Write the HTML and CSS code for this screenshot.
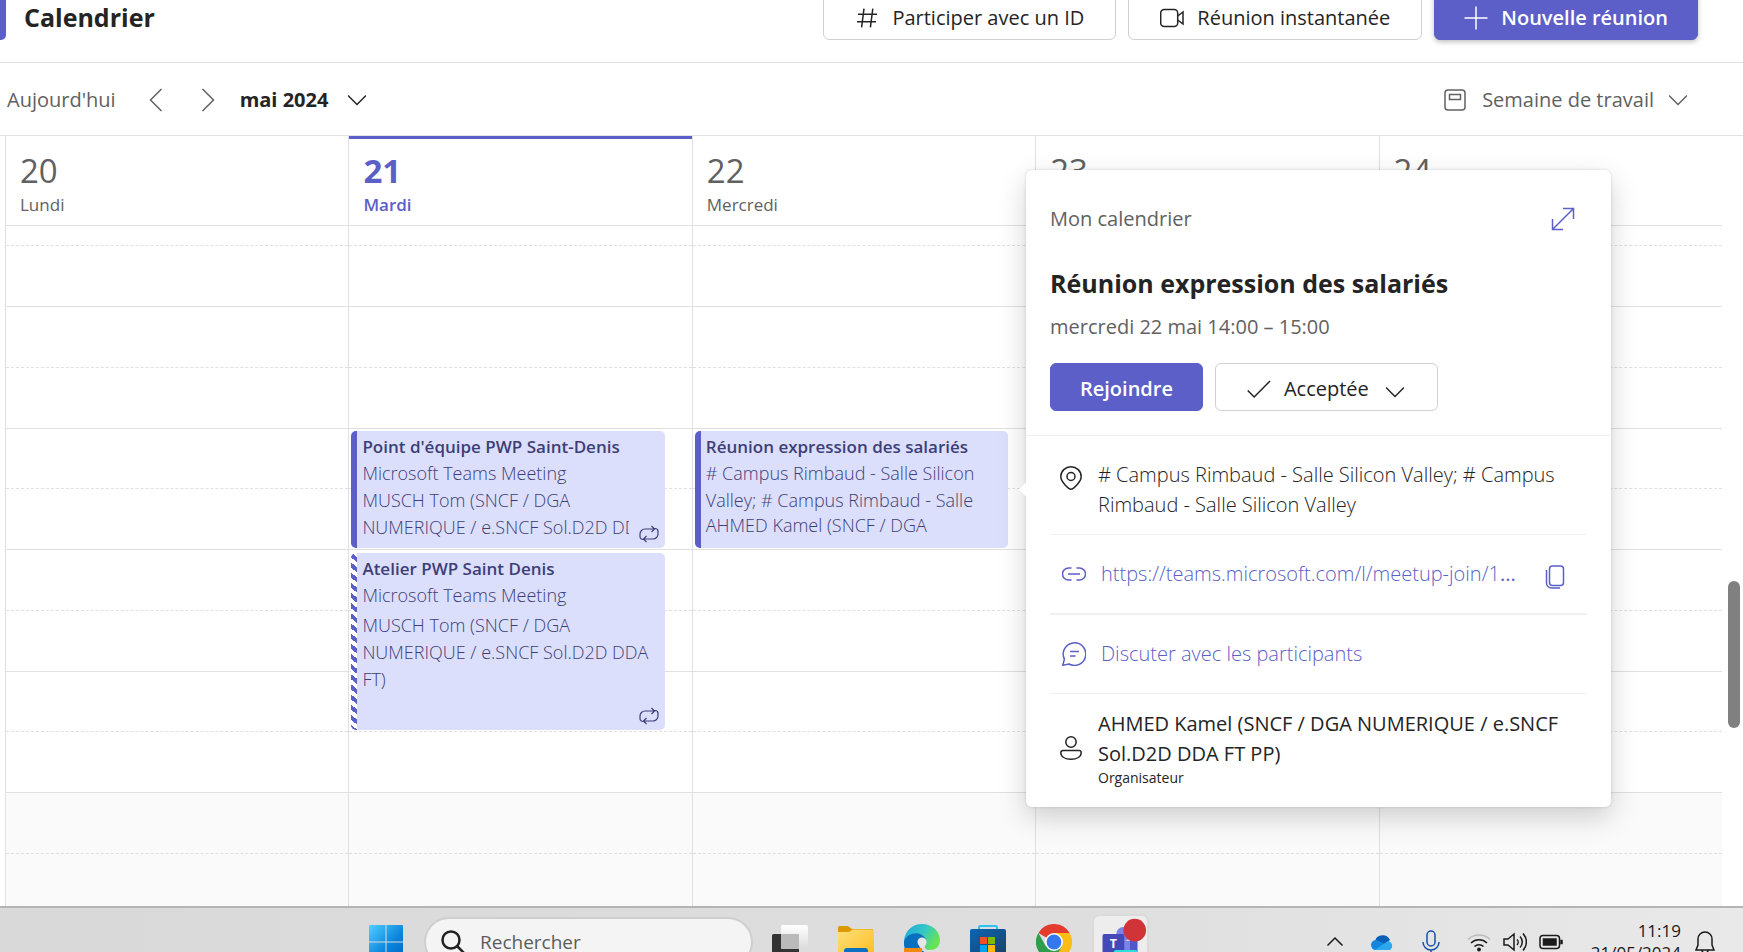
FILE: index.html
```html
<!DOCTYPE html>
<html lang="fr">
<head>
<meta charset="utf-8">
<title>Calendrier</title>
<link rel="stylesheet" href="styles.css">
</head>
<body>
<header class="header">
  <span class="header-accent"></span>
  <h1 class="header-title">Calendrier</h1>
  <div class="header-actions">
    <button class="btn btn-outline" type="button">
      <svg class="icon-24" viewBox="0 0 24 24"><path d="M9 2.600 6.600 21.400M17.800 2.600 15.400 21.400M3 8.300h19M2 15.700h19"/></svg>
      Participer avec un ID
    </button>
    <button class="btn btn-outline" type="button">
      <svg class="icon-24" viewBox="0 0 24 24"><rect x=".7" y="3.500" width="17" height="17" rx="3.500"/><path d="M17.700 10 23 6v12l-5.300-4"/></svg>
      Réunion instantanée
    </button>
    <button class="btn btn-primary btn-raised" type="button">
      <svg class="icon-24" viewBox="0 0 24 24"><path d="M12 .5v23M.5 12h23"/></svg>
      Nouvelle réunion
    </button>
  </div>
</header>

<nav class="toolbar">
  <button class="tool today" type="button">Aujourd'hui</button>
  <button class="tool" type="button" aria-label="Semaine précédente"><svg class="icon-24" viewBox="0 0 24 24"><path d="M17.500 1 6.500 12l11 11"/></svg></button>
  <button class="tool" type="button" aria-label="Semaine suivante"><svg class="icon-24" viewBox="0 0 24 24"><path d="m6.500 1 11 11-11 11"/></svg></button>
  <button class="tool month" type="button">mai 2024 <svg class="icon-18" viewBox="0 0 18 18"><path d="m0 4.500 9 9 9-9"/></svg></button>
  <button class="tool view" type="button">
    <svg class="icon-24" viewBox="0 0 24 24"><rect x="2" y="2" width="20" height="20" rx="3"/><path d="M6.500 6.500h11v5h-11z"/></svg>
    Semaine de travail
    <svg class="icon-18" viewBox="0 0 18 18"><path d="m0 4.500 9 9 9-9"/></svg>
  </button>
</nav>

<main class="calendar">
  <div class="days">
    <section class="day">
      <header class="day-head"><span class="day-num">20</span><span class="day-name">Lundi</span></header>
      <div class="slots"><i class="half"></i><i></i><i class="half"></i><i></i><i class="half"></i><i></i><i class="half"></i><i></i><i class="half"></i><i></i><i class="half off"></i><i class="off"></i></div>
    </section>
    <section class="day day-today">
      <header class="day-head"><span class="day-num">21</span><span class="day-name">Mardi</span></header>
      <div class="slots"><i class="half"></i><i></i><i class="half"></i><i></i><i class="half"></i><i></i><i class="half"></i><i></i><i class="half"></i><i></i><i class="half off"></i><i class="off"></i>
        <article class="event event-team">
          <h2>Point d'équipe PWP Saint-Denis</h2>
          <p>Microsoft Teams Meeting</p>
          <p class="clip">MUSCH Tom (SNCF / DGA<br>NUMERIQUE / e.SNCF Sol.D2D DDA</p>
          <svg class="repeat" viewBox="0 0 20 18"><path d="M4.500 14.500h-.5a3 3 0 0 1-3-3V9a5 5 0 0 1 5-5h9M15.500 3.500H16a3 3 0 0 1 3 3V9a5 5 0 0 1-5 5H5M12.500 1l3 3-3 3M7.500 11l-3 3 3 3"/></svg>
        </article>
        <article class="event event-workshop">
          <h2>Atelier PWP Saint Denis</h2>
          <p>Microsoft Teams Meeting</p>
          <p class="people">MUSCH Tom (SNCF / DGA<br>NUMERIQUE / e.SNCF Sol.D2D DDA<br>FT)</p>
          <svg class="repeat" viewBox="0 0 20 18"><path d="M4.500 14.500h-.5a3 3 0 0 1-3-3V9a5 5 0 0 1 5-5h9M15.500 3.500H16a3 3 0 0 1 3 3V9a5 5 0 0 1-5 5H5M12.500 1l3 3-3 3M7.500 11l-3 3 3 3"/></svg>
        </article>
      </div>
    </section>
    <section class="day">
      <header class="day-head"><span class="day-num">22</span><span class="day-name">Mercredi</span></header>
      <div class="slots"><i class="half"></i><i></i><i class="half"></i><i></i><i class="half"></i><i></i><i class="half"></i><i></i><i class="half"></i><i></i><i class="half off"></i><i class="off"></i>
        <article class="event event-salaries">
          <h2>Réunion expression des salariés</h2>
          <p># Campus Rimbaud - Salle Silicon<br>Valley; # Campus Rimbaud - Salle</p>
          <p class="organiser">AHMED Kamel (SNCF / DGA</p>
        </article>
      </div>
    </section>
    <section class="day">
      <header class="day-head"><span class="day-num">23</span></header>
      <div class="slots"><i class="half"></i><i></i><i class="half"></i><i></i><i class="half"></i><i></i><i class="half"></i><i></i><i class="half"></i><i></i><i class="half off"></i><i class="off"></i></div>
    </section>
    <section class="day">
      <header class="day-head"><span class="day-num">24</span></header>
      <div class="slots"><i class="half"></i><i></i><i class="half"></i><i></i><i class="half"></i><i></i><i class="half"></i><i></i><i class="half"></i><i></i><i class="half off"></i><i class="off"></i></div>
    </section>
  </div>
  <div class="scroll-track"><span class="scroll-thumb"></span></div>

  <aside class="popup">
    <div class="popup-top">
      <div class="popup-bar">
        <span>Mon calendrier</span>
        <button class="icon-btn" type="button" aria-label="Agrandir"><svg class="icon-24" viewBox="0 0 24 24"><path d="M1.500 22.500l21-21M12 1.500h10.500V12M1.500 12v10.500H12"/></svg></button>
      </div>
      <h2 class="popup-title">Réunion expression des salariés</h2>
      <p class="popup-date">mercredi 22 mai 14:00 – 15:00</p>
      <div class="popup-actions">
        <button class="btn btn-primary join" type="button">Rejoindre</button>
        <button class="btn btn-outline accept" type="button">
          <svg class="icon-24" viewBox="0 0 24 24"><path d="m.7 13.500 6.500 6.500L23 4"/></svg>
          Acceptée
          <svg class="icon-18 chevron" viewBox="0 0 18 18"><path d="m0 4.500 9 9 9-9"/></svg>
        </button>
      </div>
    </div>
    <div class="popup-body">
      <div class="row row-place">
        <svg class="icon-24" viewBox="0 0 24 24"><path d="M12 23.200C10 23.200 1.800 16 1.800 10.500a10.200 9.700 0 0 1 20.400 0C22.200 16 14 23.200 12 23.200z"/><circle cx="12" cy="10.500" r="4"/></svg>
        <p># Campus Rimbaud - Salle Silicon Valley; # Campus<br>Rimbaud - Salle Silicon Valley</p>
      </div>
      <div class="row row-link">
        <svg class="icon-24" viewBox="0 0 24 24"><path d="M9.500 6H6.500a6 6 0 0 0 0 12h3M14.500 6h3a6 6 0 0 1 0 12h-3M6 12h12"/></svg>
        <a href="#lien">https://teams.microsoft.com/l/meetup-join/1<b>...</b></a>
        <button class="icon-btn copy" type="button" aria-label="Copier"><svg class="icon-24" viewBox="0 0 24 24"><rect x="6.500" y="1" width="14" height="19.500" rx="3"/><path d="M3.500 5v13a5 5 0 0 0 5 5h8.500"/></svg></button>
      </div>
      <div class="row row-chat">
        <svg class="icon-24" viewBox="0 0 24 24"><path d="M.8 23.200l1.600-6A11.300 11.300 0 1 1 7 22z"/><path d="M8 9.500h9M8 14h5.500"/></svg>
        <a href="#discussion">Discuter avec les participants</a>
      </div>
      <div class="row row-owner">
        <svg class="icon-24" viewBox="0 0 24 24"><circle cx="12" cy="6" r="5.200"/><path d="M4 14.500h16a2.200 2.200 0 0 1 2.200 2.200c0 4-4.200 6.500-10.200 6.500S1.800 20.700 1.800 16.700A2.200 2.200 0 0 1 4 14.500z"/></svg>
        <div>
          <p>AHMED Kamel (SNCF / DGA NUMERIQUE / e.SNCF<br>Sol.D2D DDA FT PP)</p>
          <small>Organisateur</small>
        </div>
      </div>
    </div>
  </aside>
</main>

<footer class="taskbar">
  <div class="taskbar-inner">
    <button class="app" type="button" aria-label="Démarrer">
      <svg viewBox="0 0 36 36"><defs><linearGradient id="win" x1="0" y1="0" x2="1" y2="1"><stop offset="0" stop-color="#4fd0ff"/><stop offset=".6" stop-color="#0a84dc"/><stop offset="1" stop-color="#0067c6"/></linearGradient></defs><path fill="url(#win)" d="M1 2a1 1 0 0 1 1-1h15.500v16.500H1zM18.500 1H34a1 1 0 0 1 1 1v15.500H18.500zM1 18.500h16.500V35H2a1 1 0 0 1-1-1zM18.500 18.500H35V34a1 1 0 0 1-1 1H18.500z"/></svg>
    </button>
    <label class="search">
      <svg viewBox="0 0 24 24"><circle cx="10" cy="10" r="8.500"/><path d="m16 16 7 7"/></svg>
      <input type="text" placeholder="Rechercher" aria-label="Rechercher">
    </label>
    <div class="apps">
      <button class="app" type="button" aria-label="Vue des tâches">
        <svg viewBox="0 0 36 36"><defs><linearGradient id="tv" x1="0" y1="0" x2="0" y2="1"><stop offset="0" stop-color="#fff"/><stop offset="1" stop-color="#dcdcdc"/></linearGradient></defs><rect y="10" width="27" height="25" rx="1.500" fill="#333"/><rect x="9" y="1" width="27" height="24" rx="1.500" fill="url(#tv)"/><path d="M9 10h18v15H10.500A1.500 1.500 0 0 1 9 23.500z" fill="#bababa"/></svg>
      </button>
      <button class="app" type="button" aria-label="Explorateur">
        <svg viewBox="0 0 36 36"><defs><linearGradient id="fo" x1="0" y1="0" x2="1" y2="1"><stop offset="0" stop-color="#ffe07c"/><stop offset="1" stop-color="#fcbc1e"/></linearGradient></defs><path fill="#dc9a06" d="M0 3.500A1.500 1.500 0 0 1 1.500 2H10l4 3h21v8H0z"/><path fill="url(#fo)" d="M0 8h11l4-2.500h19.500A1.500 1.500 0 0 1 36 7v26H0z"/><path fill="#0d6fc4" d="M6 35V27a3 3 0 0 1 3-3h18a3 3 0 0 1 3 3v8z"/></svg>
      </button>
      <button class="app" type="button" aria-label="Edge">
        <svg viewBox="0 0 36 36"><defs><linearGradient id="ed" x1="0" y1="0" x2="1" y2=".5"><stop offset="0" stop-color="#1ba6e0"/><stop offset=".55" stop-color="#35c7c5"/><stop offset="1" stop-color="#66e551"/></linearGradient></defs><path fill="url(#ed)" d="M0 17C1 6 9 0 18 0c11 0 18 8 18 16 0 7-5 10-10 10-4 0-6-2-5-4 2-3 2-8-4-9C9 11 3 13 0 17z"/><path fill="#0b6fc0" d="M0 17c3-7 12-10 18-6 3 2 4 4 4 5-4-4-8 0-7 5 1 6 7 9 14 8-3 4-8 7-13 6C5 34-1 26 0 17z"/><path fill="#f18a10" d="M0 24h18v12H0z"/><circle cx="18" cy="18" r="4.500" fill="#e6e6e6"/></svg>
      </button>
      <button class="app" type="button" aria-label="Store">
        <svg viewBox="0 0 36 36"><defs><linearGradient id="st" x1="0" y1="0" x2="1" y2="1"><stop offset="0" stop-color="#0b66b4"/><stop offset="1" stop-color="#1b3e66"/></linearGradient></defs><path d="M9 9V3.500A1.500 1.500 0 0 1 10.500 2h15A1.500 1.500 0 0 1 27 3.500V9" fill="none" stroke="#2cc3f2" stroke-width="2"/><path fill="url(#st)" d="M0 7a2 2 0 0 1 2-2h32a2 2 0 0 1 2 2v28H0z"/><path fill="#f25022" d="M10 13h7v7h-7z"/><path fill="#7fba00" d="M18 13h7v7h-7z"/><path fill="#00a4ef" d="M10 21h7v7h-7z"/><path fill="#ffb900" d="M18 21h7v7h-7z"/></svg>
      </button>
      <button class="app" type="button" aria-label="Chrome">
        <svg viewBox="0 0 36 36"><path fill="#e33b2e" d="M18 18 2.400 9A18 18 0 0 1 33.600 9z"/><path fill="#fbbc16" d="M18 9h15.600A18 18 0 0 1 18 36l8-13.500z"/><path fill="#2e9e4b" d="M2.400 9A18 18 0 0 0 18 36l8-13.500H10z"/><circle cx="18" cy="18" r="9" fill="#fff"/><circle cx="18" cy="18" r="7.400" fill="#3478ee"/></svg>
      </button>
      <button class="app app-active" type="button" aria-label="Teams">
        <svg viewBox="0 0 56 56"><circle cx="31" cy="19" r="7.500" fill="#7b83eb"/><path fill="#7b83eb" d="M24 26h21v22H24z"/><path fill="#5059c9" d="M38 26h8v22h-8z"/><rect x="9" y="19" width="23" height="24" rx="2" fill="#4449b8"/><text x="20.500" y="34" text-anchor="middle" class="teams-t">T</text><rect x="21" y="36" width="25" height="12" rx="2" fill="#2ce0dc"/><text x="34" y="44" text-anchor="middle" class="teams-new">NEW</text><circle cx="43" cy="15" r="12" fill="#d13438"/></svg>
      </button>
    </div>
    <div class="tray">
      <svg viewBox="0 0 24 24"><path d="m4.500 15.500 7.500-7.500 7.500 7.500"/></svg>
      <svg viewBox="0 0 24 24" class="solid"><path fill="#0a5fb8" d="M4 11a8 8 0 0 1 15-1l-8 6z"/><path fill="#1485dc" d="M5 20a5 5 0 1 1 2-9.600L20 17z"/><path fill="#2ba8ee" d="M4 19.800 17 11a5 5 0 0 1 2 9H5z"/></svg>
      <svg viewBox="0 0 24 24" class="mic"><rect x="8" y="1" width="8" height="15" rx="4"/><path d="M4 12a8 8 0 0 0 16 0M12 20v4"/></svg>
      <svg viewBox="0 0 24 24"><path stroke="#bbb" d="M1 9.500a16 16 0 0 1 22 0"/><path d="M4 13a11.500 11.500 0 0 1 16 0M7.500 16.500a6.500 6.500 0 0 1 9 0"/><circle cx="12" cy="19.500" r="1.200" fill="#1b1b1b"/></svg>
      <svg viewBox="0 0 24 24"><path d="M1 9h4l6-5v16l-6-5H1zM14 9.500c1.500 1.500 1.500 4 0 5.500M17 6.500c3 3 3 8 0 11M20 3.500c4.500 5 4.500 12 0 17"/></svg>
      <svg viewBox="0 0 24 24"><rect x="1" y="5.500" width="19.500" height="13" rx="3"/><path fill="#1b1b1b" d="M4.500 9h12.500v6H4.500zM22 10.500v3h1v-3z"/></svg>
      <div class="clock"><span>11:19</span><span>21/05/2024</span></div>
      <svg viewBox="0 0 24 24"><path d="M3 20h18l-2-5V9A7 7 0 0 0 5 9v6zM9 20a3 3 0 0 0 6 0"/></svg>
    </div>
  </div>
</footer>
</body>
</html>
```

FILE: styles.css
```css
* { box-sizing: border-box; }

body {
  margin: 0;
  height: 100vh;
  display: flex;
  flex-direction: column;
  overflow: hidden;
  background: #fff;
  color: #242424;
  font: 20px/30px "Open Sans", "Noto Sans", sans-serif;
}

h1, h2, p { margin: 0; }
button { font: inherit; color: inherit; background: none; border: 0; padding: 0; }
a { color: #5b5fc7; text-decoration: none; }
svg { display: block; flex: none; fill: none; stroke: currentColor; stroke-width: 1.5; }
.icon-24 { width: 24px; height: 24px; }
.icon-18 { width: 18px; height: 18px; }

/* Header */
.header {
  flex: none;
  height: 63px;
  display: flex;
  align-items: flex-end;
  padding: 0 45px 22px 0;
  border-bottom: 1px solid #e0e0e0;
}
.header-accent { width: 6px; height: 48px; background: #5b5fc7; border-radius: 0 0 5px 0; }
.header-title { margin: 0 auto 6px 18px; font-size: 25px; line-height: 34px; font-weight: 700; }
.header-actions { display: flex; gap: 12px; }

.btn {
  height: 48px;
  display: flex;
  align-items: center;
  gap: 13px;
  padding: 3px 29px 0;
  border: 1px solid #d1d1d1;
  border-radius: 6px;
  font-weight: 600;
  white-space: nowrap;
}
.btn-outline { padding: 3px 31px 0; background: #fff; font-weight: 500; }
.btn-primary { background: #5b5fc7; border-color: #5b5fc7; color: #fff; }
.btn-raised { box-shadow: 0 2px 5px rgba(0, 0, 0, .25); }

/* Toolbar */
.toolbar {
  flex: none;
  height: 73px;
  display: flex;
  align-items: center;
  padding: 2px 56px 0 7px;
  border-bottom: 1px solid #e0e0e0;
  color: #616161;
}
.tool { display: flex; align-items: center; gap: 18px; margin-right: 28px; }
.month { margin-left: -8px; gap: 20px; color: #242424; font-weight: 700; }
.view { margin: 0 0 0 auto; gap: 15px; }

/* Week grid */
.calendar { position: relative; flex: 1; min-height: 0; display: flex; overflow: hidden; }
.days { flex: 1; display: grid; grid-template-columns: repeat(5, 1fr); padding-left: 5px; overflow: hidden; }
.day { min-width: 0; border-left: 1px solid #e0e0e0; }
.day-head {
  height: 90px;
  display: flex;
  flex-direction: column;
  padding: 16px 14px 0;
  border-bottom: 1px solid #e0e0e0;
  color: #616161;
}
.day-num { font-size: 33px; line-height: 38px; }
.day-name { font-size: 17px; line-height: 30px; }
.day-today .day-head { border-top: 3px solid #5b5fc7; padding-top: 13px; color: #5b5fc7; }
.day-today .day-num { font-weight: 700; }
.day-today .day-name { font-weight: 600; }

.slots { display: grid; grid-template-columns: 1fr; grid-template-rows: 20px 61px 61px 61px 60px 61px 61px 61px 60px 61px 61px 61px; }
.slots i { grid-column: 1; border-bottom: 1px solid #e0e0e0; }
.slots .half { border-bottom-style: dashed; }
.slots .off { background: #fafafa; }
.slots i:nth-of-type(1) { grid-row: 1; }
.slots i:nth-of-type(2) { grid-row: 2; }
.slots i:nth-of-type(3) { grid-row: 3; }
.slots i:nth-of-type(4) { grid-row: 4; }
.slots i:nth-of-type(5) { grid-row: 5; }
.slots i:nth-of-type(6) { grid-row: 6; }
.slots i:nth-of-type(7) { grid-row: 7; }
.slots i:nth-of-type(8) { grid-row: 8; }
.slots i:nth-of-type(9) { grid-row: 9; }
.slots i:nth-of-type(10) { grid-row: 10; }
.slots i:nth-of-type(11) { grid-row: 11; }
.slots i:nth-of-type(12) { grid-row: 12; }

.event {
  position: relative;
  grid-column: 1;
  margin: 2px 27px 2px 2px;
  padding: 2px 9px 0 11px;
  overflow: hidden;
  border-radius: 5px;
  background: linear-gradient(#5b5fc7, #5b5fc7) 0 0 / 6px 100% no-repeat #dcdffb;
  color: #3d3e78;
  font-size: 18px;
  line-height: 27px;
  font-weight: 300;
  white-space: nowrap;
}
.event h2 { font-size: 17px; line-height: 27px; font-weight: 600; }
.event-team, .event-salaries { grid-row: 5 / 7; }
.event-workshop {
  grid-row: 7 / 10;
  margin-top: 3px;
  background: repeating-linear-gradient(38deg, #5b5fc7 0 4px, #fff 4px 8px) 0 0 / 6px 100% no-repeat #dcdffb;
}
.clip { overflow: hidden; margin-right: 27px; }
.people { padding-top: 3px; }
.organiser { line-height: 22px; }
.repeat { position: absolute; right: 6px; bottom: 5px; width: 20px; height: 18px; stroke-width: 1.2; }

.scroll-track { flex: none; width: 21px; padding: 445px 3px 0 6px; }
.scroll-thumb { display: block; height: 147px; border-radius: 6px; background: #808080; }

/* Event details */
.popup {
  position: absolute;
  top: 34px;
  right: 132px;
  width: 585px;
  border-radius: 6px;
  background: #fff;
  box-shadow: 0 0 3px rgba(0, 0, 0, .15), 0 10px 28px rgba(0, 0, 0, .18);
}
.popup::before {
  content: "";
  position: absolute;
  left: -4px;
  top: 312px;
  width: 15px;
  height: 15px;
  background: #fff;
  transform: rotate(45deg);
}
.popup-top { position: relative; padding: 34px 24px 24px; border-bottom: 1px solid #f0f0f0; }
.popup-bar { display: flex; justify-content: space-between; align-items: center; padding-right: 12px; color: #616161; }
.icon-btn { color: #5b5fc7; }
.popup-title { padding-top: 30px; font-size: 25px; line-height: 38px; font-weight: 700; }
.popup-date { padding-top: 10px; color: #616161; }
.popup-actions { display: flex; gap: 12px; padding-top: 21px; }
.accept .chevron { margin: 6px 2px 0 4px; }
.popup-body { padding: 0 24px; }
.row { display: flex; gap: 15px; padding-left: 9px; border-bottom: 1px solid #f0f0f0; white-space: nowrap; }
.row-place { padding-top: 24px; height: 99px; font-weight: 300; }
.row-place svg { margin-top: 6px; }
.row-link, .row-chat { height: 80px; align-items: center; padding-left: 12px; color: #5b5fc7; font-weight: 300; }
.row-link { border-bottom-width: 2px; }
.row-chat { height: 79px; }
.copy { margin: 6px 20px 0 auto; }
.row-owner { align-items: center; padding-top: 15px; border-bottom: 0; padding-bottom: 20px; }
.row-owner small { display: block; font-size: 14px; line-height: 18px; }

/* Taskbar */
.taskbar {
  flex: none;
  height: 46px;
  overflow: hidden;
  border-top: 2px solid #b4b4b4;
  background: linear-gradient(90deg, #d9d9d9, #dedede 60%, #e9e9e9);
}
.taskbar-inner { height: 68px; display: flex; align-items: center; padding: 0 26px 0 368px; }
.app { width: 36px; height: 36px; }
.app svg { width: 100%; height: 100%; stroke: none; }
.search {
  flex: none;
  width: 329px;
  height: 50px;
  display: flex;
  align-items: center;
  gap: 15px;
  margin: 0 19px 0 20px;
  padding: 0 15px;
  border: 2px solid #cfcfcf;
  border-radius: 25px;
  background: #f4f4f4;
}
.search svg { width: 24px; height: 24px; stroke: #222; stroke-width: 2.5; }
.search input { width: 200px; border: 0; padding: 0; background: none; font: 19px/26px "Open Sans", "Noto Sans", sans-serif; }
.search input::placeholder { color: #5c5c5c; opacity: 1; }
.apps { display: flex; align-items: center; gap: 30px; }
.app-active { width: 57px; height: 57px; margin-left: -10px; border: 2px solid #dadada; border-radius: 7px; background: #ededed; }
.app-active svg { overflow: visible; }
.teams-t { font: 700 13px "Open Sans", sans-serif; fill: #fff; }
.teams-new { font: 700 9px "Open Sans", sans-serif; fill: #10305a; }
.tray { display: flex; align-items: center; gap: 12px; margin-left: auto; color: #1b1b1b; }
.tray > svg { width: 24px; height: 24px; }
.tray > .solid { stroke: none; margin-left: 12px; }
.tray > .mic { color: #1550a8; margin: 0 12px; }
.clock { width: 106px; display: flex; flex-direction: column; align-items: flex-end; font-size: 17px; line-height: 22px; }
```
